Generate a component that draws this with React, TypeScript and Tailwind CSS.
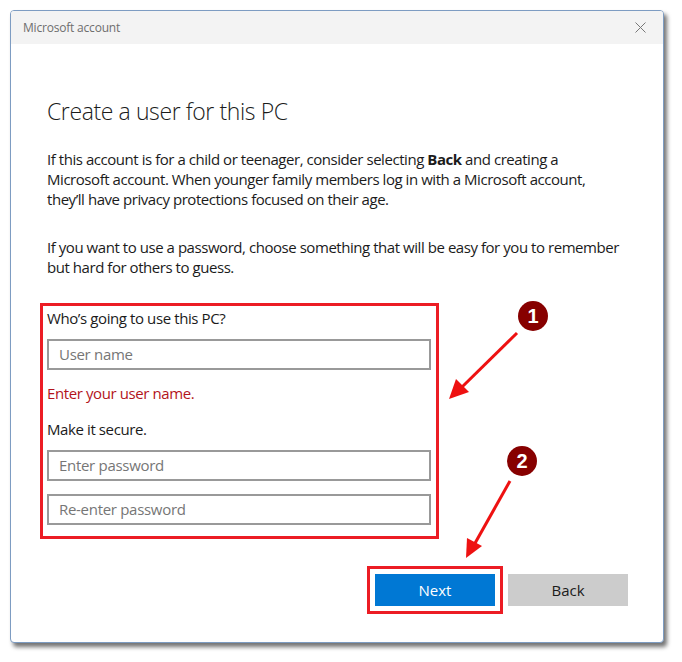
import React from "react";

const font = { fontFamily: '"Segoe UI", "Open Sans", "Noto Sans", sans-serif' };

export default function App() {
  return (
    <div className="relative w-[682px] h-[662px] bg-white pl-[10px] pt-[10px]" style={font}>
      <div className="w-[654px] h-[633px] border border-[#7d9cc2] rounded-[4px] bg-white shadow-[3px_4px_4px_rgba(0,0,0,0.55)] flex flex-col overflow-hidden">
        <div className="h-[33px] bg-[#f3f3f3] flex items-center justify-between pl-[12px] pr-[17px] shrink-0">
          <span className="text-[12px] text-[#6e6e6e] tracking-[-0.2px]">Microsoft account</span>
          <svg width="11" height="11" viewBox="0 0 11 11">
            <path d="M0.5 0.5 L10.5 10.5 M10.5 0.5 L0.5 10.5" stroke="#777" strokeWidth="1" />
          </svg>
        </div>
        <div className="flex-1 flex flex-col pl-[36px] pr-[20px] pt-[51px]">
          <h1 className="text-[23px] leading-[32px] font-light text-[#1b1b1b] tracking-[-0.4px]">Create a user for this PC</h1>
          <p className="mt-[22px] text-[15px] leading-[20px] text-[#1b1b1b] tracking-[-0.45px]">
            If this account is for a child or teenager, consider selecting <b className="font-bold">Back</b> and creating a
            <br />
            Microsoft account. When younger family members log in with a Microsoft account,
            <br />
            they’ll have privacy protections focused on their age.
          </p>
          <p className="mt-[28px] text-[15px] leading-[20px] text-[#1b1b1b] tracking-[-0.45px]">
            If you want to use a password, choose something that will be easy for you to remember
            <br />
            but hard for others to guess.
          </p>
          <div className="mt-[26px] -ml-[7px] w-[399px] border-[3px] border-[#ec1c24] pl-[4px] pr-[5px] pt-[2px] pb-[11px] flex flex-col">
            <span className="text-[15px] leading-[20px] text-[#1b1b1b] tracking-[-0.4px]">Who’s going to use this PC?</span>
            <div className="mt-[11px] h-[31px] border-2 border-[#999] flex items-center pl-[10px] text-[15px] text-[#767676] tracking-[-0.3px]">User name</div>
            <span className="mt-[13px] text-[15px] leading-[20px] text-[#b3141b] tracking-[-0.4px]">Enter your user name.</span>
            <span className="mt-[16px] text-[15px] leading-[20px] text-[#1b1b1b] tracking-[-0.4px]">Make it secure.</span>
            <div className="mt-[11px] h-[31px] border-2 border-[#999] flex items-center pl-[10px] text-[15px] text-[#767676] tracking-[-0.3px]">Enter password</div>
            <div className="mt-[13px] h-[31px] border-2 border-[#999] flex items-center pl-[10px] text-[15px] text-[#767676] tracking-[-0.3px]">Re-enter password</div>
          </div>
          <div className="mt-[27px] flex justify-end items-center pr-[15px]">
            <div className="border-[3px] border-[#ec1c24] p-[5px]">
              <div className="w-[120px] h-[32px] bg-[#0078d4] text-white text-[15px] flex items-center justify-center">Next</div>
            </div>
            <div className="ml-[5px] w-[120px] h-[32px] bg-[#cccccc] text-[#1b1b1b] text-[15px] flex items-center justify-center">Back</div>
          </div>
        </div>
      </div>
      <svg className="absolute left-0 top-0 pointer-events-none" width="682" height="662" viewBox="0 0 682 662">
        <line x1="517" y1="333" x2="461" y2="388" stroke="#ee1111" strokeWidth="3" />
        <path d="M449 399 L456 379 L469 392 Z" fill="#ee1111" />
        <line x1="510" y1="481" x2="474" y2="545" stroke="#ee1111" strokeWidth="3" />
        <path d="M466 558 L467 538 L482 546 Z" fill="#ee1111" />
        <circle cx="533" cy="316" r="15" fill="#870000" />
        <text x="533" y="323" textAnchor="middle" fill="#fff" fontSize="20" fontWeight="bold" fontFamily="Arial, 'Liberation Sans', sans-serif">1</text>
        <circle cx="522" cy="461" r="15" fill="#870000" />
        <text x="522" y="468" textAnchor="middle" fill="#fff" fontSize="20" fontWeight="bold" fontFamily="Arial, 'Liberation Sans', sans-serif">2</text>
      </svg>
    </div>
  );
}
